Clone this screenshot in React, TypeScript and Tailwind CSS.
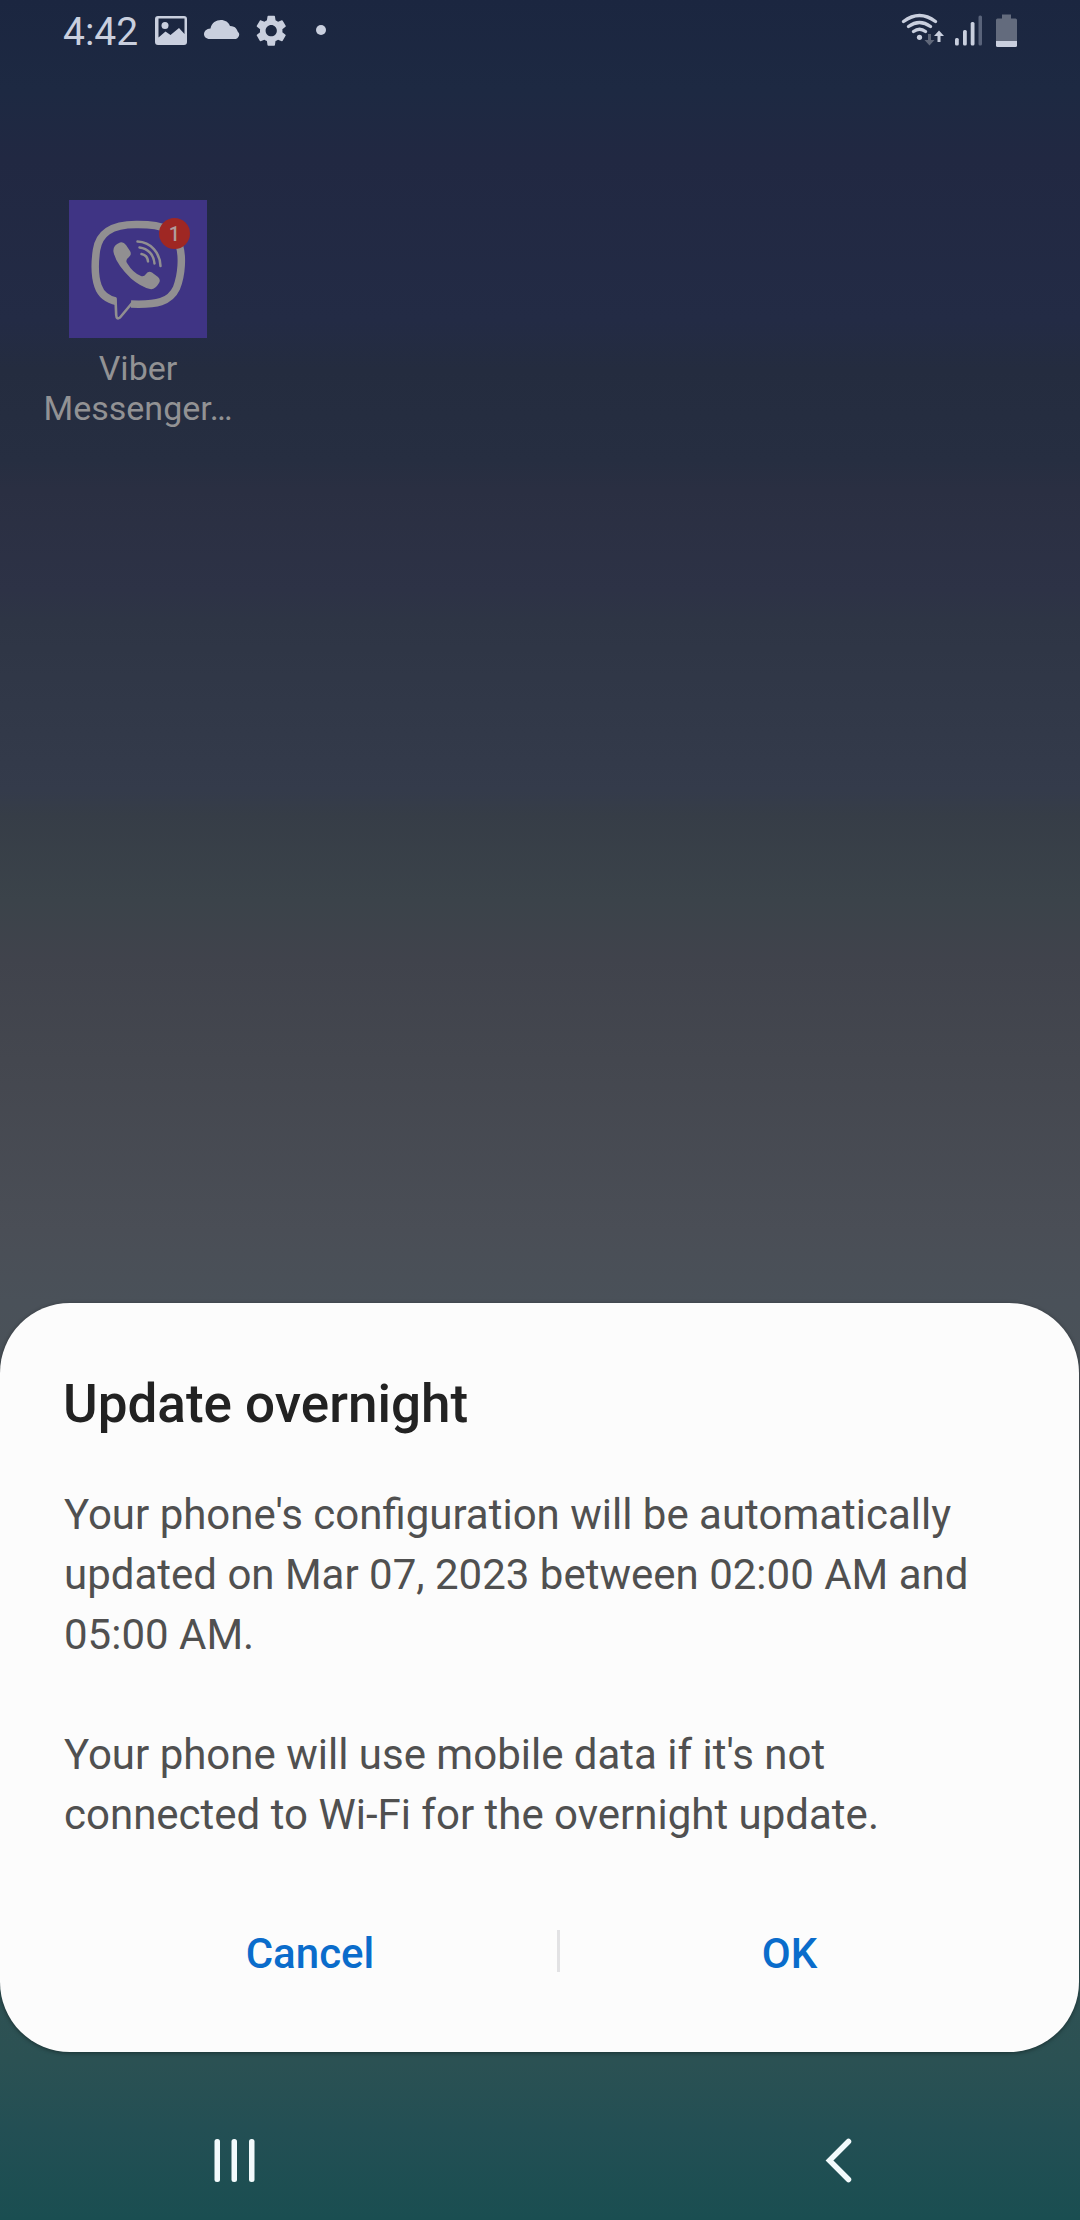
const LIGHT = '#c9cfde';

function StatusBar() {
  return (
    <header className="flex h-[64px] shrink-0 items-start justify-between">
      <div className="flex pl-[63px]">
        <span className="mt-[10px] w-[76px] whitespace-nowrap text-[39px] leading-[44px] text-[#c9cfde]">4:42</span>
        <svg className="h-[64px] w-[200px]" viewBox="139 0 200 64" fill={LIGHT}>
          <path fillRule="evenodd" d="M158 16h26a3 3 0 0 1 3 3v23a3 3 0 0 1-3 3h-26a3 3 0 0 1-3-3V19a3 3 0 0 1 3-3zm0.500 2.500v19l7-6 5 3.500 8.500-7 5.500 6v-15.500z" />
          <circle cx="165" cy="25.500" r="3.500" />
          <path d="M210 39c-8 0-8-10 0.500-10.500 2-11 17-11 19.500-2.500 6 0 7 4 8 6 3 2 0 7-2.500 7z" />
          <g transform="translate(252.500 12) scale(1.560)">
            <path d="M19.140 12.940c.04-.3.06-.61.06-.94 0-.32-.02-.64-.07-.94l2.030-1.580a.49.49 0 0 0 .12-.61l-1.920-3.320a.488.488 0 0 0-.59-.22l-2.390.96c-.5-.38-1.030-.7-1.620-.94l-.36-2.540a.484.484 0 0 0-.48-.41h-3.840c-.24 0-.43.17-.47.41l-.36 2.540c-.59.24-1.130.57-1.620.94l-2.390-.96c-.22-.08-.47 0-.59.22L2.740 8.870c-.12.21-.08.47.12.61l2.030 1.580c-.05.3-.09.63-.09.94s.02.64.07.94l-2.030 1.580a.49.49 0 0 0-.12.61l1.920 3.320c.12.22.37.29.59.22l2.390-.96c.5.38 1.030.7 1.620.94l.36 2.540c.05.24.24.41.48.41h3.840c.24 0 .44-.17.47-.41l.36-2.540c.59-.24 1.130-.56 1.620-.94l2.390.96c.22.08.47 0 .59-.22l1.920-3.320c.12-.22.07-.47-.12-.61l-2.010-1.580zM12 15.600c-1.980 0-3.600-1.620-3.600-3.600s1.620-3.600 3.600-3.600 3.600 1.620 3.600 3.600-1.620 3.600-3.600 3.600z" />
          </g>
          <circle cx="321" cy="30" r="5" />
        </svg>
      </div>
      <svg className="h-[64px] w-[180px]" viewBox="900 0 180 64" fill={LIGHT}>
        <g fill="none" stroke={LIGHT} strokeWidth="3.400" strokeLinecap="round">
          <path d="M903.500 21.500q16-12 32 0" />
          <path d="M908.500 26.500q11-8 22 0" />
          <path d="M913.500 31.500q6-4.500 12 0" />
        </g>
        <circle cx="919.500" cy="37.300" r="2.600" />
        <path fill="#5f6779" d="M928 34h3v6h3.500l-5 5.500-5-5.500h3.500z" />
        <path d="M939 30.500l5 5.500h-3.500v6h-3v-6h-3.500z" />
        <rect x="955" y="38" width="3.800" height="7.500" rx="1.500" />
        <rect x="963" y="30" width="3.800" height="15.500" rx="1.500" />
        <rect x="970.700" y="22" width="3.800" height="23.500" rx="1.500" />
        <rect x="978.500" y="15.500" width="3.500" height="30" rx="1.500" fill="#59637a" />
        <path fill="#636b7d" d="M1002 14.500h9v4h4.500q1.500 0 1.500 1.500v21h-21v-21q0-1.500 1.500-1.500h4.500z" />
        <path d="M996 41h21v4.500q0 1.500-1.500 1.500h-18q-1.500 0-1.500-1.500z" />
      </svg>
    </header>
  );
}

function ViberWidget() {
  return (
    <div className="mt-[136px] flex w-[276px] flex-col items-center">
      <div className="relative size-[138px] bg-[#3f3484]">
        <svg className="size-full" viewBox="0 0 138 138">
          <path
            fill="none"
            stroke="#918f91"
            strokeWidth="7.500"
            d="M62 104C88 105 101 102 107.500 88C113 74 113.500 56 110.500 46C106 30 96 24.500 69 24.500C41 24 30 34 27.500 50C25.500 64 25.500 76 29 86C32 95 38 99.500 48 101.500"
          />
          <path fill="#3f3484" d="M47.500 96H62V102L50 117L47.500 116Z" />
          <path fill="none" stroke="#918f91" strokeWidth="2.600" strokeLinejoin="round" strokeLinecap="round" d="M46.500 99L47.200 115Q47.500 120 51 117.500L63.500 102.500" />
          <path fill="#918f91" d="M51 42.500Q54.500 41.500 57 45L61 51Q63 54.500 60 57Q56 60 58 63Q64 73 72 76Q75 77 77 74Q79.500 70.500 83 72.500L89 77Q92 80 90 83Q86 90 81 89Q72 87 62 78.500Q47 64 44.500 52Q43.500 45.500 51 42.500Z" />
          <g fill="none" stroke="#918f91" strokeWidth="2.500" strokeLinecap="round">
            <path d="M68.500 41.500C82 42 91 53 91.500 66" />
            <path d="M70.500 47.500C79 48.500 85 55 85.500 63.500" />
            <path d="M72.500 54Q78.500 55 79 61.500" />
          </g>
        </svg>
        <span className="absolute left-[90px] top-[18px] flex size-[31px] items-center justify-center rounded-full bg-[#9f2723] text-[20px] font-medium text-[#b09c9c]">
          1
        </span>
      </div>
      <p className="mt-[10px] whitespace-nowrap text-center text-[34px] leading-[40px] text-[#929294]">
        Viber
        <br />
        Messenger…
      </p>
    </div>
  );
}

function UpdateDialog() {
  return (
    <section className="flex h-[749px] w-[1079px] shrink-0 flex-col rounded-[70px] bg-[#fcfcfc] shadow-[0_1px_4px_rgba(0,0,0,0.4)]">
      <h1 className="mt-[68px] px-[63px] text-[53px] font-medium leading-[66px] text-[#222222]">Update overnight</h1>
      <div className="mt-[48px] whitespace-nowrap px-[64px] text-[42px] leading-[60px] text-[#505050]">
        <p>
          Your phone's configuration will be automatically
          <br />
          updated on Mar 07, 2023 between 02:00 AM and
          <br />
          05:00 AM.
        </p>
        <p className="mt-[60px]">
          Your phone will use mobile data if it's not
          <br />
          connected to Wi-Fi for the overnight update.
        </p>
      </div>
      <div className="mt-[79px] flex h-[60px] items-start text-[42px] font-medium leading-[60px] text-[#0a6ccb]">
        <button className="ml-[63px] w-[494px]">Cancel</button>
        <span className="mt-[6px] h-[42px] w-[3px] bg-[#e2e2e4]" />
        <button className="w-[459px]">OK</button>
      </div>
    </section>
  );
}

function NavigationBar() {
  return (
    <nav className="flex h-[168px] shrink-0 items-end">
      <svg className="h-[100px] w-[540px]" viewBox="0 2120 540 100" fill="#f3fafc">
        <rect x="214.500" y="2139" width="5.500" height="43" rx="2.500" />
        <rect x="231.500" y="2139" width="5.500" height="43" rx="2.500" />
        <rect x="249" y="2139" width="5.500" height="43" rx="2.500" />
      </svg>
      <svg className="h-[100px] w-[540px]" viewBox="540 2120 540 100">
        <path d="M848.500 2141.500L829.500 2160.500L848.500 2179.500" fill="none" stroke="#f3fafc" strokeWidth="5.500" strokeLinecap="round" />
      </svg>
    </nav>
  );
}

export default function App() {
  return (
    <main className="flex h-[2220px] w-[1080px] flex-col overflow-hidden bg-[linear-gradient(180deg,#1b2640_0px,#1d2942_90px,#212842_160px,#232b45_320px,#242c3f_370px,#262e41_460px,#2a2f42_490px,#2d3246_590px,#2e3545_620px,#343b4b_790px,#363d47_815px,#3b434a_900px,#40434c_960px,#44474f_1060px,#4a4e56_1230px,#4a5159_1300px,#4a5458_1500px,#2b5153_2060px,#234f54_2130px,#1a4e51_2220px)] font-[Roboto,sans-serif]">
      <StatusBar />
      <ViberWidget />
      <div className="grow" />
      <UpdateDialog />
      <NavigationBar />
    </main>
  );
}
